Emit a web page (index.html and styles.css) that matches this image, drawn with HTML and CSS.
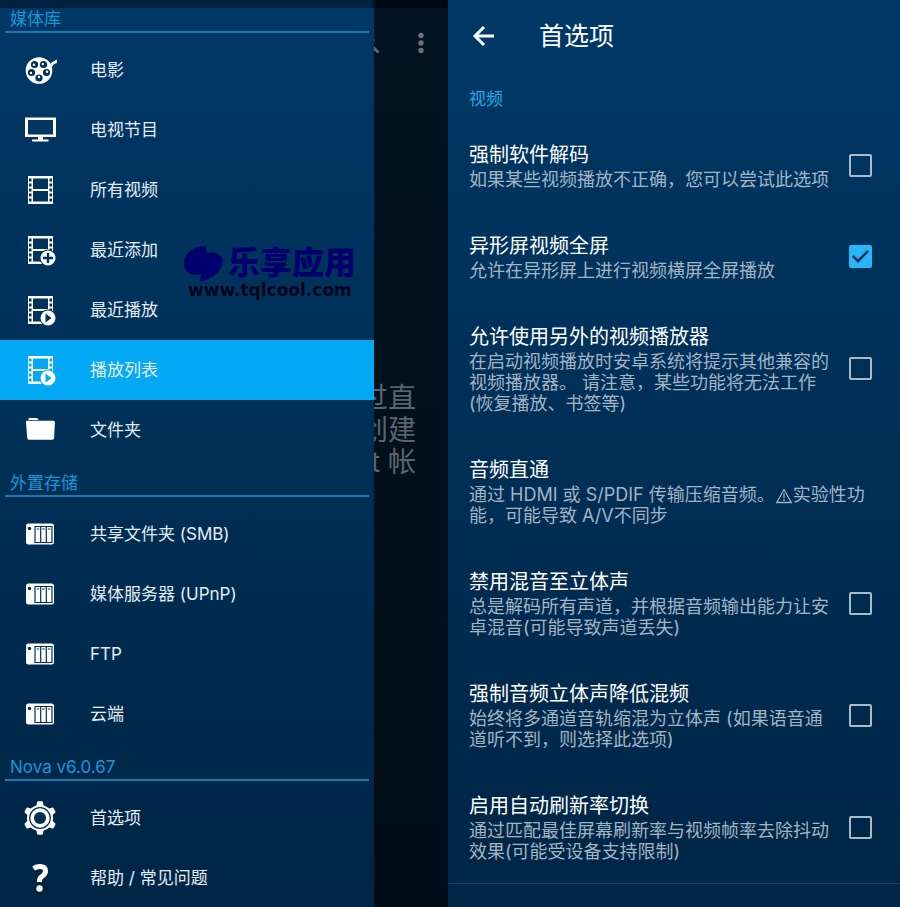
FILE: index.html
```html
<!DOCTYPE html>
<html lang="zh-CN">
<head>
<meta charset="utf-8">
<meta name="viewport" content="width=device-width, initial-scale=1">
<title>Nova</title>
<link rel="stylesheet" href="styles.css">
</head>
<body>
<svg class="sprite" aria-hidden="true">
  <symbol id="film" viewBox="0 0 34 34">
    <path fill="currentColor" fill-rule="evenodd" d="M5 3h25v28H5zM10 5.500v10.500h15V5.500zM10 18v10.500h15V18zM6 5.500v3h2.500v-3zM6 10.500v3h2.500v-3zM6 15.500v3h2.500v-3zM6 20.500v3h2.500v-3zM6 25.500v3h2.500v-3zM26.500 5.500v3H29v-3zM26.500 10.500v3H29v-3zM26.500 15.500v3H29v-3zM26.500 20.500v3H29v-3zM26.500 25.500v3H29v-3z"/>
  </symbol>
  <symbol id="film-cut" viewBox="0 0 34 34">
    <mask id="cut"><path fill="#fff" d="M0 0h34v34H0z"/><circle cx="25" cy="25" r="8.500" fill="#000"/></mask>
    <g mask="url(#cut)"><use href="#film" width="34" height="34"/></g>
  </symbol>
  <symbol id="film-play" viewBox="0 0 34 34">
    <use href="#film-cut" width="34" height="34"/>
    <path fill="currentColor" fill-rule="evenodd" d="M25 17.500a7.500 7.500 0 1 1 0 15a7.500 7.500 0 0 1 0-15zM22.500 20.500v9l6-4.500z"/>
  </symbol>
  <symbol id="nas" viewBox="0 0 34 34">
    <rect x="3" y="6.500" width="28" height="21" rx="2.500" fill="currentColor"/>
    <circle cx="6.500" cy="11.500" r="1.700" class="ink-fill"/>
    <path class="ink-line" d="M12 9.500h17v16H12zM17.700 9.500v16M23.300 9.500v16M13.800 12h2.400M19.300 12h2.400M25 12h2.400"/>
  </symbol>
</svg>
<div class="screens">
  <section class="library">
    <div class="statusbar"></div>
    <nav class="drawer">
      <h2 class="group">媒体库</h2>
      <a class="entry" href="#movies"><svg class="icon" viewBox="0 0 34 34"><path fill="currentColor" d="M28 16l2.500-4.500 4.500-2V6l-6.500 3.500-3 3.500z"/><circle cx="16" cy="17.500" r="13.300" fill="currentColor"/><g class="ink-fill"><circle cx="11.500" cy="11.500" r="3.600"/><circle cx="20.500" cy="11.500" r="3.600"/><circle cx="8.500" cy="19.500" r="3.600"/><circle cx="23.500" cy="19.500" r="3.600"/><circle cx="16" cy="25" r="3.600"/></g><g fill="currentColor"><circle cx="10.900" cy="11.800" r="1.200"/><circle cx="19.800" cy="11" r="1.200"/><circle cx="8" cy="20" r="1.200"/><circle cx="24" cy="18.800" r="1.200"/><circle cx="16" cy="24" r="1.200"/></g></svg><span>电影</span></a>
      <a class="entry" href="#shows"><svg class="icon" viewBox="0 0 34 34"><path fill="currentColor" fill-rule="evenodd" d="M2 4.500h31v19.500H20v2.500h5.500V28.500H9V26.500h6V24H2zM5 7v14.500h25V7z"/></svg><span>电视节目</span></a>
      <a class="entry" href="#videos"><svg class="icon"><use href="#film"/></svg><span>所有视频</span></a>
      <a class="entry" href="#added"><svg class="icon" viewBox="0 0 34 34"><use href="#film-cut" width="34" height="34"/><path fill="currentColor" fill-rule="evenodd" d="M25 17.500a7.500 7.500 0 1 1 0 15a7.500 7.500 0 0 1 0-15zM23.800 20v3.800H20v2.400h3.800V30h2.400v-3.800H30v-2.400h-3.800V20z"/></svg><span>最近添加</span></a>
      <a class="entry" href="#played"><svg class="icon"><use href="#film-play"/></svg><span>最近播放</span></a>
      <a class="entry selected" href="#playlists"><svg class="icon"><use href="#film-play"/></svg><span>播放列表</span></a>
      <a class="entry" href="#folders"><svg class="icon" viewBox="0 0 34 34"><path fill="currentColor" d="M5.500 7V6q0-1 1-1h7q1 0 1.500 1l.5 1zM3.500 7.700h27q1.500 0 1.400 1.800l-.8 15.500q-.2 1.700-1.800 1.700H6q-1.700 0-1.800-1.700L3 9.500q-.2-1.800.5-1.800z"/></svg><span>文件夹</span></a>
      <h2 class="group">外置存储</h2>
      <a class="entry" href="#smb"><svg class="icon"><use href="#nas"/></svg><span>共享文件夹 (SMB)</span></a>
      <a class="entry" href="#upnp"><svg class="icon"><use href="#nas"/></svg><span>媒体服务器 (UPnP)</span></a>
      <a class="entry" href="#ftp"><svg class="icon"><use href="#nas"/></svg><span>FTP</span></a>
      <a class="entry" href="#cloud"><svg class="icon"><use href="#nas"/></svg><span>云端</span></a>
      <h2 class="group">Nova v6.0.67</h2>
      <a class="entry" href="#preferences"><svg class="icon" viewBox="0 0 34 34"><g fill="currentColor"><circle cx="17" cy="17" r="13"/><path id="tooth" d="M13 6l1.200-5q.2-.7 1-.7h3.600q.8 0 1 .7L21 6v22l-1.200 5q-.2.700-1 .7h-3.600q-.8 0-1-.7L13 28z"/><use href="#tooth" transform="rotate(60 17 17)"/><use href="#tooth" transform="rotate(120 17 17)"/></g><circle cx="17" cy="17" r="10.300" class="ink-line"/><circle cx="17" cy="17" r="6" class="ink-fill"/></svg><span>首选项</span></a>
      <a class="entry" href="#help"><svg class="icon" viewBox="0 0 34 34"><path fill="none" stroke="currentColor" stroke-width="5" d="M10.500 7.500q3-2 6.500-2q5.500 0 5.500 4.500q0 3-3 5q-3 2-3 4.500v1.500"/><circle cx="16.500" cy="27.500" r="3.200" fill="currentColor"/></svg><span>帮助 / 常见问题</span></a>
    </nav>
    <div class="scrim">
      <div class="toolbar">
        <svg class="search" viewBox="0 0 24 24"><circle cx="9.500" cy="9.500" r="6.500"/><path d="M14 14l7.500 7.500"/></svg>
        <svg class="more" viewBox="0 0 6 22"><circle cx="3" cy="3.500" r="2.700"/><circle cx="3" cy="11" r="2.700"/><circle cx="3" cy="18.500" r="2.700"/></svg>
      </div>
      <p class="hint">通过直<br>创建<br>t 帐</p>
    </div>
    <div class="brand">
      <svg class="brand-mark" viewBox="0 0 39 36"><path d="M23 0Q10 0 3 8Q-1 14 0 20Q2 28 10 29L18 28Q15 32 16 36Q32 31 37 22Q41 14 36 9Q31 5 23 7Q21 3 23 0z"/></svg>
      <span class="brand-name">乐享应用</span>
      <span class="brand-site">www.tqlcool.com</span>
    </div>
  </section>
  <main class="settings">
    <header class="titlebar">
      <button class="back" type="button" aria-label="返回"><svg viewBox="0 0 24 24"><path d="M22 12H3.500M12 3l-9 9 9 9"/></svg></button>
      <h1>首选项</h1>
    </header>
    <h2 class="category">视频</h2>
    <label class="setting"><span class="copy"><span class="name">强制软件解码</span><span class="desc">如果某些视频播放不正确，您可以尝试此选项</span></span><input type="checkbox"></label>
    <label class="setting"><span class="copy"><span class="name">异形屏视频全屏</span><span class="desc">允许在异形屏上进行视频横屏全屏播放</span></span><input type="checkbox" checked></label>
    <label class="setting"><span class="copy"><span class="name">允许使用另外的视频播放器</span><span class="desc">在启动视频播放时安卓系统将提示其他兼容的视频播放器。 请注意，某些功能将无法工作(恢复播放、书签等)</span></span><input type="checkbox"></label>
    <div class="setting"><span class="copy"><span class="name">音频直通</span><span class="desc">通过 HDMI 或 S/PDIF 传输压缩音频。<svg class="warn" viewBox="0 0 18 18" role="img" aria-label="警告"><path d="M9 2.500L16.300 15.500H1.700zM9 6.500v5M9 12.500v1.500"/></svg>实验性功能，可能导致 A/V不同步</span></span></div>
    <label class="setting"><span class="copy"><span class="name">禁用混音至立体声</span><span class="desc">总是解码所有声道，并根据音频输出能力让安卓混音(可能导致声道丢失)</span></span><input type="checkbox"></label>
    <label class="setting"><span class="copy"><span class="name">强制音频立体声降低混频</span><span class="desc">始终将多通道音轨缩混为立体声 (如果语音通道听不到，则选择此选项)</span></span><input type="checkbox"></label>
    <label class="setting"><span class="copy"><span class="name">启用自动刷新率切换</span><span class="desc">通过匹配最佳屏幕刷新率与视频帧率去除抖动效果(可能受设备支持限制)</span></span><input type="checkbox"></label>
    <hr>
  </main>
</div>
</body>
</html>
```

FILE: styles.css
```css
* { box-sizing: border-box; }

body {
  margin: 0;
  font-family: Inter, "Noto Sans CJK SC", "DejaVu Sans", sans-serif;
  color: #fff;
  background: #002647;
}

h1, h2, p { margin: 0; font-weight: 400; }

.sprite { position: absolute; width: 0; height: 0; }

.screens {
  display: grid;
  grid-template-columns: 448fr 452fr;
  min-height: 100vh;
  background: linear-gradient(#003866, #002545);
}

/* Library screen with its open drawer */
.library {
  position: relative;
  display: grid;
  grid-template-columns: 374fr 74fr;
  grid-template-rows: 8px 1fr;
}

.statusbar {
  grid-column: 1 / -1;
  background: linear-gradient(90deg, #00213f 83%, #000912 84%);
}

.group {
  display: flex;
  align-items: flex-end;
  height: 37px;
  margin: 0 5px 7px;
  padding: 0 5px 2px;
  border-bottom: 2px solid #127bb8;
  color: #1597dc;
  font-size: 17px;
  line-height: 20px;
}

.group:first-child { height: 25px; }

.entry {
  display: flex;
  align-items: center;
  gap: 33px;
  height: 60px;
  padding-left: 23px;
  color: #fff;
  font-size: 17px;
  line-height: 20px;
  text-decoration: none;
}

.entry span { color: #e4edf5; }

.selected { background: #03a9f4; }

.icon { width: 34px; height: 34px; flex: none; }

.ink-fill { fill: #003058; }
.ink-line { fill: none; stroke: #003058; stroke-width: 1.2; }

.scrim {
  overflow: hidden;
  background: linear-gradient(#021421, #000c18);
  color: #5c646b;
}

.toolbar {
  display: flex;
  justify-content: flex-end;
  align-items: center;
  gap: 37px;
  height: 70px;
  padding-right: 24px;
}

.search { width: 24px; height: 24px; flex: none; fill: none; stroke: #5c646b; stroke-width: 3; }
.more { width: 6px; height: 22px; flex: none; fill: #6a7076; }

.hint {
  display: flex;
  justify-content: flex-end;
  margin-top: 304px;
  padding-right: 32px;
  font-size: 28px;
  line-height: 32px;
  text-align: right;
  white-space: nowrap;
}

.brand {
  position: absolute;
  top: 246px;
  left: 184px;
  display: grid;
  grid-template-columns: 39px auto;
  column-gap: 5px;
  color: #00006c;
}

.brand-mark { width: 39px; height: 36px; fill: #00006c; }

.brand-name {
  font-size: 32px;
  font-weight: 900;
  line-height: 34px;
}

.brand-site {
  grid-column: 1 / -1;
  padding-left: 4px;
  color: #00051c;
  font-family: "DejaVu Sans", sans-serif;
  font-size: 17px;
  font-weight: 700;
  line-height: 17px;
}

/* Preferences screen */
.titlebar {
  display: flex;
  align-items: center;
  gap: 43px;
  height: 72px;
  margin-bottom: 6px;
  padding-left: 24px;
}

.titlebar h1 { font-size: 25px; line-height: 32px; }

.back {
  width: 24px;
  height: 24px;
  padding: 0;
  border: 0;
  background: none;
}

.back svg { display: block; width: 24px; height: 24px; fill: none; stroke: #fff; stroke-width: 3; }

.category {
  padding-left: 21px;
  color: #25a9ea;
  font-size: 17px;
  line-height: 42px;
}

.setting {
  display: flex;
  align-items: center;
  gap: 18px;
  padding: 21px 28px 21px 21px;
}

.copy { flex: 1; }

.name, .desc { display: block; }

.name { font-size: 20px; line-height: 28px; }

.desc { color: #a3b4c4; font-size: 18px; line-height: 21px; }

.warn {
  width: 18px;
  height: 18px;
  fill: none;
  stroke: currentColor;
  stroke-width: 1.3;
  vertical-align: text-bottom;
}

.setting input {
  appearance: none;
  display: grid;
  place-items: center;
  flex: none;
  width: 23px;
  height: 23px;
  margin: 0;
  border: 2px solid #a9bac9;
  border-radius: 2px;
}

.setting input:checked { border-color: #29b6f6; background: #29b6f6; }

.setting input:checked::before {
  content: "";
  width: 17px;
  height: 13px;
  background: #003058;
  clip-path: polygon(0 52%, 10% 40%, 35% 72%, 90% 0, 100% 12%, 35% 100%);
}

hr {
  height: 1px;
  margin: 0;
  border: 0;
  background: #1c405c;
}
```
